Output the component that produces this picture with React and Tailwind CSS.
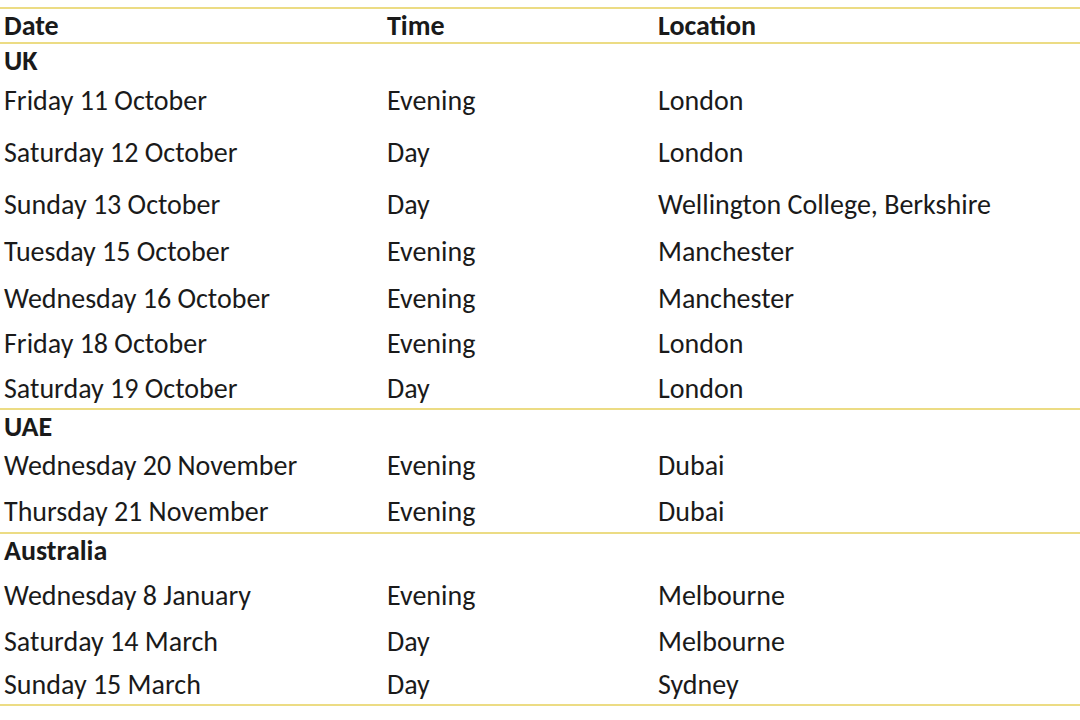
import React from 'react';

const sections = [
  {
    name: 'UK',
    head: 40,
    rows: [
      { date: 'Friday 11 October', time: 'Evening', place: 'London', h: 52 },
      { date: 'Saturday 12 October', time: 'Day', place: 'London', h: 52 },
      { date: 'Sunday 13 October', time: 'Day', place: 'Wellington College, Berkshire', h: 47 },
      { date: 'Tuesday 15 October', time: 'Evening', place: 'Manchester', h: 47 },
      { date: 'Wednesday 16 October', time: 'Evening', place: 'Manchester', h: 45 },
      { date: 'Friday 18 October', time: 'Evening', place: 'London', h: 45 },
      { date: 'Saturday 19 October', time: 'Day', place: 'London', h: 36 },
    ],
  },
  {
    name: 'UAE',
    head: 39,
    rows: [
      { date: 'Wednesday 20 November', time: 'Evening', place: 'Dubai', h: 46 },
      { date: 'Thursday 21 November', time: 'Evening', place: 'Dubai', h: 37 },
    ],
  },
  {
    name: 'Australia',
    head: 45,
    rows: [
      { date: 'Wednesday 8 January', time: 'Evening', place: 'Melbourne', h: 46 },
      { date: 'Saturday 14 March', time: 'Day', place: 'Melbourne', h: 43 },
      { date: 'Sunday 15 March', time: 'Day', place: 'Sydney', h: 36 },
    ],
  },
];

function Rule() {
  return <div className="h-[2px] w-full bg-[#ecdc84]" />;
}

function Row({ cells, height, bold }) {
  return (
    <div
      className={`grid grid-cols-[383px_271px_1fr] pl-[4px] ${bold ? 'font-bold' : ''}`}
      style={{ height }}
    >
      {cells.map((c, i) => (
        <div key={i} className="leading-[34px] whitespace-nowrap">{c}</div>
      ))}
    </div>
  );
}

export default function App() {
  return (
    <div
      className="w-[1080px] h-[720px] bg-white text-[#1a1a1a] text-[28px] pt-[7px]"
      style={{ fontFamily: 'Carlito, "Open Sans", sans-serif' }}
    >
      <Rule />
      <Row cells={['Date', 'Time', 'Location']} height={33} bold />
      {sections.map((s) => (
        <React.Fragment key={s.name}>
          <Rule />
          <Row cells={[s.name, '', '']} height={s.head} bold />
          {s.rows.map((r) => (
            <Row key={r.date} cells={[r.date, r.time, r.place]} height={r.h} />
          ))}
        </React.Fragment>
      ))}
      <Rule />
    </div>
  );
}
